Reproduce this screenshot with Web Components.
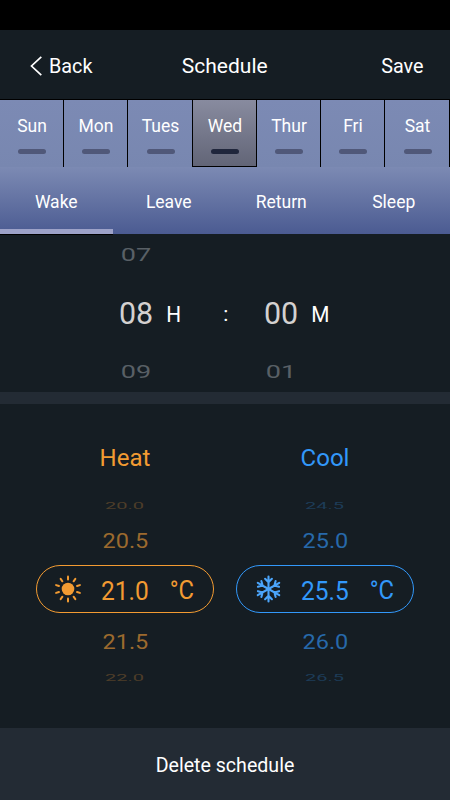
<!DOCTYPE html>
<html lang="en">
<head>
<meta charset="utf-8">
<title>Schedule</title>
<style>
html, body { margin: 0; background: #000; }
body { width: 450px; height: 800px; overflow: hidden; font-family: Roboto, "Liberation Sans", sans-serif; }
</style>
</head>
<body>
<schedule-app></schedule-app>
<script>
const define = (name, html, setup) => {
  const template = document.createElement('template');
  template.innerHTML = html;
  customElements.define(name, class extends HTMLElement {
    constructor() {
      super();
      this.attachShadow({ mode: 'open' }).append(template.content.cloneNode(true));
    }
    connectedCallback() { if (setup) setup(this, this.shadowRoot); }
  });
};

define('app-header', `
<style>
:host { display: grid; grid-template-columns: 1fr 1fr 1fr; height: 69px; padding: 4px 26.5px 0 30px; box-sizing: border-box; align-items: center; color: #fff; font-size: 19.8px; line-height: 24px; }
.back { display: flex; align-items: center; gap: 7px; }
.title { text-align: center; font-size: 21px; margin: 0 3px 1px -1px; white-space: nowrap; }
.save { text-align: right; }
svg { display: block; margin-bottom: 2px; }
</style>
<div class="back"><svg width="12" height="20" viewBox="0 0 12 20"><path d="M11.3 .8 1.5 10l9.8 9.2" fill="none" stroke="#fff" stroke-width="1.7"/></svg><span><slot name="back"></slot></span></div>
<div class="title"><slot></slot></div>
<div class="save"><slot name="save"></slot></div>`);

define('day-cell', `
<style>
:host { display: flex; flex-direction: column; align-items: center; box-sizing: border-box; height: 67px; padding: 16px 0 0 1px; border-right: 1px solid #000; background: linear-gradient(#7c8ab4, #7887b0); color: #fff; font-size: 17.5px; line-height: 21px; }
:host([selected]) { background: linear-gradient(#888b9f, #626577); border-bottom: 1px solid #000; }
i { width: 28px; height: 5px; margin-top: 12px; border-radius: 2.5px; background: #505879; }
:host([selected]) i { background: #20263c; }
</style>
<span><slot></slot></span><i></i>`);

define('day-strip', `
<style>
:host { display: grid; grid-template-columns: 64fr 64fr 65fr 64fr 64fr 64fr 65fr; border-top: 1px solid #000; }
</style><slot></slot>`);

define('period-tab', `
<style>
:host { display: flex; flex-direction: column; align-items: center; justify-content: space-between; height: 67px; color: #fff; font-size: 17.5px; line-height: 21px; }
span { padding-top: 25px; }
i { width: 100%; height: 5px; }
:host([selected]) i { background: #9da2c8; border-bottom: 1px solid #000; margin-bottom: -1px; }
</style><span><slot></slot></span><i></i>`);

define('period-tabs', `
<style>
:host { display: grid; grid-template-columns: repeat(4, 1fr); height: 67px; background: linear-gradient(#7c8ab3, #4b5b92); }
</style><slot></slot>`);

define('wheel-value', `
<style>
:host { display: flex; align-items: center; justify-content: center; white-space: nowrap; line-height: 1; }
span { display: block; font-size: var(--size); transform: scale(var(--sx, 1), var(--sy, 1)); }
</style><span><slot></slot></span>`);

define('time-wheel', `
<style>
:host { display: grid; grid-template-columns: 38px auto; grid-template-rows: 42px 76px 41px; column-gap: 11px; color: #fff; }
.n { grid-column: 1; }
.faded { --size: 28.5px; --sx: .95; --sy: .65; color: #596066; }
.now { --size: 32px; --sx: .95; color: #d3d1d0; padding: 0 0 2px; }
.unit { --size: 21.5px; --sx: .97; grid-column: 2; grid-row: 2; justify-content: start; padding-top: 1px; }
</style>
<wheel-value class="n faded"><slot name="prev"></slot></wheel-value>
<wheel-value class="n now"><slot></slot></wheel-value>
<wheel-value class="unit"><slot name="unit"></slot></wheel-value>
<wheel-value class="n faded"><slot name="next"></slot></wheel-value>`);

define('time-picker', `
<style>
:host { display: grid; grid-template-columns: 145px auto 1fr; height: 157px; padding-left: 117.3px; color: #fff; }
.c { grid-column: 1; grid-row: 1; --size: 21px; justify-self: end; height: 161px; margin-right: 34px; }
::slotted([slot=hours]) { grid-column: 1; grid-row: 1; }
::slotted([slot=minutes]) { grid-column: 2; grid-row: 1; }
</style>
<slot name="hours"></slot><wheel-value class="c">:</wheel-value><slot name="minutes"></slot>`);

define('sun-icon', `
<style>:host { display: block; width: 28px; height: 28px; } svg { display: block; }</style>
<svg width="28" height="28" viewBox="-14 -14 28 28"><circle r="6.3" fill="currentColor"/><g class="rays" stroke="currentColor" stroke-width="2" stroke-linecap="round"></g></svg>`,
(host, root) => {
  root.querySelector('.rays').innerHTML = Array.from({ length: 10 }, (_, i) => `<path d="M0 -9.5V-12.5" transform="rotate(${i * 36})"/>`).join('');
});

define('snow-icon', `
<style>:host { display: block; width: 28px; height: 28px; color: #4ba5fb; } svg { display: block; }</style>
<svg width="28" height="28" viewBox="-14.5 -14 28 28"><g class="arms" fill="none" stroke="currentColor" stroke-width="2.1" stroke-linecap="round"></g></svg>`,
(host, root) => {
  root.querySelector('.arms').innerHTML = Array.from({ length: 6 }, (_, i) => `<path d="M0 0V-12.4M-3.4 -10.2 0 -6.8 3.4 -10.2" transform="rotate(${i * 60})"/>`).join('');
});

define('temp-wheel', `
<style>
:host { display: grid; grid-template-rows: 55px 42px 28px 68px 38px 33px; align-items: center; color: var(--tone); }
.title { --size: 24px; }
.far { --size: 22px; --sx: .91; --sy: .42; color: var(--far); padding-right: .5px; }
.near { --size: 25px; --sx: .94; --sy: .8; color: var(--near); }
.pill { display: grid; grid-template-columns: 28px 50px 28px; column-gap: 18px; align-items: center; width: 178px; height: 48px; box-sizing: border-box; justify-self: center; padding-left: 16.5px; border: 1.5px solid var(--tone); border-radius: 24px; }
.now { --size: 25.5px; --sx: .96; padding: 5px 0 0; }
.unit { --size: 25px; --sx: .95; padding: 3px 0 0 1px; }
</style>
<wheel-value class="title"><slot name="title"></slot></wheel-value>
<wheel-value class="far"><slot name="far-prev"></slot></wheel-value>
<wheel-value class="near"><slot name="prev"></slot></wheel-value>
<div class="pill"><slot name="icon"></slot><wheel-value class="now"><slot></slot></wheel-value><wheel-value class="unit">°C</wheel-value></div>
<wheel-value class="near"><slot name="next"></slot></wheel-value>
<wheel-value class="far"><slot name="far-next"></slot></wheel-value>`);

define('delete-bar', `
<style>:host { display: flex; align-items: center; justify-content: center; height: 72px; box-sizing: border-box; padding-top: 4px; background: #232b34; color: #fff; font-size: 19.6px; line-height: 24px; }</style><slot></slot>`);

define('schedule-app', `
<style>
:host { display: flex; flex-direction: column; width: 450px; height: 770px; margin-top: 30px; background: #151d23; }
.divider { height: 12px; margin-top: 1px; background: #232b34; }
.temps { display: grid; grid-template-columns: 200px 200px; justify-content: center; height: 324px; box-sizing: border-box; padding-top: 26px; align-content: start; }
.heat { --tone: #f29b32; --near: #9c6a2e; --far: #4e3d29; }
.cool { --tone: #3298fa; --near: #2769aa; --far: #1d3c58; }
</style>
<app-header><span slot="back">Back</span>Schedule<span slot="save">Save</span></app-header>
<day-strip><day-cell>Sun</day-cell><day-cell>Mon</day-cell><day-cell>Tues</day-cell><day-cell selected>Wed</day-cell><day-cell>Thur</day-cell><day-cell>Fri</day-cell><day-cell>Sat</day-cell></day-strip>
<period-tabs><period-tab selected>Wake</period-tab><period-tab>Leave</period-tab><period-tab>Return</period-tab><period-tab>Sleep</period-tab></period-tabs>
<time-picker>
<time-wheel slot="hours"><span slot="prev">07</span>08<span slot="unit">H</span><span slot="next">09</span></time-wheel>
<time-wheel slot="minutes">00<span slot="unit">M</span><span slot="next">01</span></time-wheel>
</time-picker>
<div class="divider"></div>
<div class="temps">
<temp-wheel class="heat"><span slot="title">Heat</span><span slot="far-prev">20.0</span><span slot="prev">20.5</span><sun-icon slot="icon"></sun-icon>21.0<span slot="next">21.5</span><span slot="far-next">22.0</span></temp-wheel>
<temp-wheel class="cool"><span slot="title">Cool</span><span slot="far-prev">24.5</span><span slot="prev">25.0</span><snow-icon slot="icon"></snow-icon>25.5<span slot="next">26.0</span><span slot="far-next">26.5</span></temp-wheel>
</div>
<delete-bar>Delete schedule</delete-bar>`);
</script>
</body>
</html>
